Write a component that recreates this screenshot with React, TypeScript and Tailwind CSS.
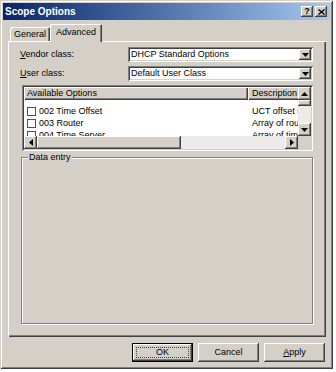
const raised =
  "shadow-[inset_-1px_-1px_#404040,inset_1px_1px_#ffffff,inset_-2px_-2px_#808080,inset_2px_2px_#d4d0c8]";
const sunken =
  "shadow-[inset_1px_1px_#808080,inset_-1px_-1px_#ffffff,inset_2px_2px_#404040,inset_-2px_-2px_#d4d0c8]";
const windowEdge =
  "shadow-[inset_1px_1px_#d4d0c8,inset_-1px_-1px_#404040,inset_2px_2px_#ffffff,inset_-2px_-2px_#808080]";
const header =
  "shadow-[inset_1px_1px_#ffffff,inset_-1px_-1px_#404040,inset_-2px_-2px_#808080]";

function Arrow({ dir }: { dir: "up" | "down" | "left" | "right" }) {
  const pts = {
    up: "0,4 7,4 3.5,0",
    down: "0,0 7,0 3.5,4",
    left: "4,0 4,7 0,3.5",
    right: "0,0 0,7 4,3.5",
  }[dir];
  const vertical = dir === "up" || dir === "down";
  return (
    <svg width={vertical ? 7 : 4} height={vertical ? 4 : 7} viewBox={vertical ? "0 0 7 4" : "0 0 4 7"}>
      <polygon points={pts} fill="#000" />
    </svg>
  );
}

function ScrollBtn({ dir }: { dir: "up" | "down" | "left" | "right" }) {
  return (
    <div className={`w-[13px] h-[13px] shrink-0 bg-[#d4d0c8] flex items-center justify-center ${raised}`}>
      <Arrow dir={dir} />
    </div>
  );
}

function Combo({ text }: { text: string }) {
  return (
    <div className={`flex-1 h-[15px] bg-white p-[2px] flex items-center ${sunken}`}>
      <span className="flex-1 pl-[1px] whitespace-nowrap">{text}</span>
      <div className={`w-[12px] h-[11px] bg-[#d4d0c8] flex items-center justify-center ${raised}`}>
        <Arrow dir="down" />
      </div>
    </div>
  );
}

function Check() {
  return <div className="w-[9px] h-[9px] shrink-0 border border-[#505050] bg-white" />;
}

const options = [
  { name: "002 Time Offset", desc: "UCT offset in seconds" },
  { name: "003 Router", desc: "Array of router addresses" },
  { name: "004 Time Server", desc: "Array of time server addresses" },
];

export default function App() {
  return (
    <div className="w-[336px] h-[372px] bg-white font-['Liberation_Sans',Arial,sans-serif] text-[9px] leading-[9px] text-black">
      <div className={`w-[333px] h-[369px] bg-[#d4d0c8] p-[3px] flex flex-col ${windowEdge}`}>
        {/* title bar */}
        <div className="h-[17px] shrink-0 flex items-center justify-between pl-[2px] pr-[3px] bg-linear-to-r from-[#0a246a] to-[#a6caf0]">
          <span className="text-white font-bold text-[10px] leading-[10px]">Scope Options</span>
          <div className="flex gap-[2px]">
            <div className={`w-[12px] h-[11px] bg-[#d4d0c8] flex items-center justify-center font-bold text-[9px] ${raised}`}>
              ?
            </div>
            <div className={`w-[12px] h-[11px] bg-[#d4d0c8] flex items-center justify-center ${raised}`}>
              <svg width="7" height="6" viewBox="0 0 7 6">
                <path d="M0.5 0.5 L6.5 5.5 M6.5 0.5 L0.5 5.5" stroke="#000" strokeWidth="1.4" />
              </svg>
            </div>
          </div>
        </div>

        {/* tabs */}
        <div className="mt-[4px] ml-[5px] h-[17px] shrink-0 flex items-end relative z-10">
          <div className="ml-[2px] w-[40px] h-[14px] rounded-t-[2px] flex items-center justify-center shadow-[inset_1px_1px_#ffffff,inset_-1px_0_#404040,inset_-2px_0_#808080]">
            General
          </div>
          <div className="w-[52px] h-[18px] -mb-[1px] bg-[#d4d0c8] rounded-t-[2px] flex items-center justify-center pb-[1px] shadow-[inset_1px_1px_#ffffff,inset_-1px_0_#404040,inset_-2px_0_#808080]">
            Advanced
          </div>
        </div>

        {/* tab panel */}
        <div className="ml-[5px] mr-[4px] h-[296px] shrink-0 flex flex-col pt-[6px] pl-[12px] pr-[13px] pb-[13px] shadow-[inset_1px_1px_#ffffff,inset_-1px_-1px_#404040,inset_-2px_-2px_#808080]">
          <div className="flex items-center h-[15px]">
            <span className="w-[108px] shrink-0">
              <u>V</u>endor class:
            </span>
            <Combo text="DHCP Standard Options" />
          </div>
          <div className="flex items-center h-[15px] mt-[4px]">
            <span className="w-[108px] shrink-0">
              <u>U</u>ser class:
            </span>
            <Combo text="Default User Class" />
          </div>

          {/* list view */}
          <div className={`ml-[2px] mt-[4px] h-[66px] shrink-0 bg-white p-[2px] ${sunken}`}>
            <div className="grid grid-cols-[1fr_13px] grid-rows-[1fr_13px] h-full">
              <div className="overflow-hidden">
                <div className="flex h-[13px]">
                  <div className={`w-[224px] shrink-0 bg-[#d4d0c8] pl-[3px] flex items-center ${header}`}>
                    Available Options
                  </div>
                  <div className={`w-[70px] shrink-0 bg-[#d4d0c8] pl-[4px] flex items-center ${header}`}>
                    Description
                  </div>
                </div>
                <div className="pt-[5px]">
                  {options.map((o) => (
                    <div key={o.name} className="flex h-[12px] items-center whitespace-nowrap">
                      <div className="w-[224px] shrink-0 flex items-center pl-[3px] gap-[3px]">
                        <Check />
                        <span>{o.name}</span>
                      </div>
                      <span className="pl-[4px]">{o.desc}</span>
                    </div>
                  ))}
                </div>
              </div>
              <div className="flex flex-col">
                <ScrollBtn dir="up" />
                <div className={`h-[6px] bg-[#d4d0c8] ${raised}`} />
                <div className="flex-1 bg-[#ecebe7]" />
                <ScrollBtn dir="down" />
              </div>
              <div className="flex">
                <ScrollBtn dir="left" />
                <div className={`w-[144px] bg-[#d4d0c8] ${raised}`} />
                <div className="flex-1 bg-[#ecebe7]" />
                <ScrollBtn dir="right" />
              </div>
              <div className="bg-[#d4d0c8]" />
            </div>
          </div>

          {/* group box */}
          <div className="ml-[1px] mt-[6px] flex-1 flex flex-col border border-[#808080] shadow-[1px_1px_0_#ffffff,inset_1px_1px_0_#ffffff]">
            <span className="self-start -mt-[5px] ml-[6px] px-[1px] bg-[#d4d0c8]">Data entry</span>
          </div>
        </div>

        {/* buttons */}
        <div className="mt-[6px] mr-[5px] flex justify-end gap-[5px]">
          <div className="w-[61px] h-[19px] border border-black bg-[#d4d0c8] flex">
            <div className={`flex-1 flex items-center justify-center p-[3px] ${raised}`}>
              <div className="w-full h-full border border-dotted border-[#404040] flex items-center justify-center">
                OK
              </div>
            </div>
          </div>
          <div className={`w-[61px] h-[19px] bg-[#d4d0c8] flex items-center justify-center ${raised}`}>Cancel</div>
          <div className={`w-[61px] h-[19px] bg-[#d4d0c8] flex items-center justify-center ${raised}`}>
            <span>
              <u>A</u>pply
            </span>
          </div>
        </div>
      </div>
    </div>
  );
}
